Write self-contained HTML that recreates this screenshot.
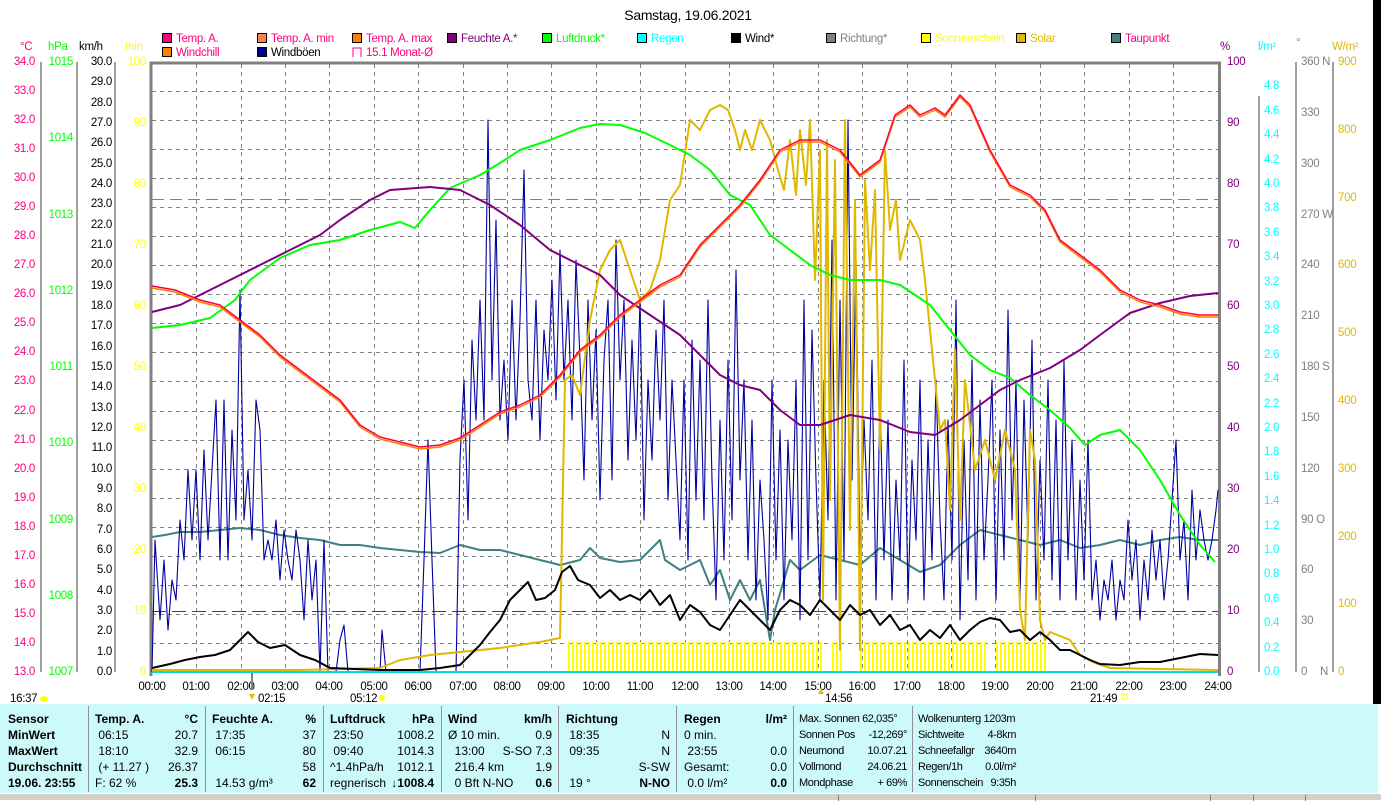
<!DOCTYPE html>
<html><head><meta charset="utf-8">
<style>
*{margin:0;padding:0;box-sizing:border-box}
body{width:1381px;height:800px;overflow:hidden;background:#fff;font-family:"Liberation Sans",sans-serif;position:relative}
svg{position:absolute;left:0;top:0}
svg text{font-family:"Liberation Sans",sans-serif;font-size:11.5px;letter-spacing:-0.3px}
.tbl{position:absolute;left:0;top:704px;width:1378px;height:89px;background:#ccf9f9}
.col{position:absolute;top:7px;font-size:12px;color:#000}
.col div{height:16px;line-height:16px;display:flex;justify-content:space-between;white-space:nowrap}
.sm{font-size:11px;letter-spacing:-0.4px}
.b{font-weight:bold}
.dv{position:absolute;top:2px;width:1px;height:86px;background:#909090}
.sb{position:absolute;left:0;top:793px;width:1381px;height:7px;background:#d4d0c8;border-top:1px solid #fff}
.sb i{position:absolute;top:1px;height:6px;border-left:1px solid #808080}
</style></head><body>
<svg width="1381" height="704" viewBox="0 0 1381 704">
<defs>
<pattern id="sun" width="4" height="30" patternUnits="userSpaceOnUse"><rect x="0" y="0" width="2" height="30" fill="#ffff00"/></pattern>
</defs>
<rect x="1373" y="0" width="8" height="704" fill="#000"/>
<text x="688" y="20" text-anchor="middle" style="font-size:14px">Samstag, 19.06.2021</text>
<g style="font-size:11.5px">
<rect x="162.5" y="33.5" width="9" height="9" fill="#ff0080" stroke="#000"/><text x="176" y="42" fill="#ff0080">Temp. A.</text>
<rect x="257.5" y="33.5" width="9" height="9" fill="#ff8040" stroke="#000"/><text x="271" y="42" fill="#ff0080">Temp. A. min</text>
<rect x="352.5" y="33.5" width="9" height="9" fill="#ff8000" stroke="#000"/><text x="366" y="42" fill="#ff0080">Temp. A. max</text>
<rect x="447.5" y="33.5" width="9" height="9" fill="#800080" stroke="#000"/><text x="461" y="42" fill="#800080">Feuchte A.*</text>
<rect x="542.5" y="33.5" width="9" height="9" fill="#00ff00" stroke="#000"/><text x="556" y="42" fill="#00ff00">Luftdruck*</text>
<rect x="637.5" y="33.5" width="9" height="9" fill="#00ffff" stroke="#000"/><text x="651" y="42" fill="#00ffff">Regen</text>
<rect x="731.5" y="33.5" width="9" height="9" fill="#000" stroke="#000"/><text x="745" y="42" fill="#000">Wind*</text>
<rect x="826.5" y="33.5" width="9" height="9" fill="#808080" stroke="#000"/><text x="840" y="42" fill="#808080">Richtung*</text>
<rect x="921.5" y="33.5" width="9" height="9" fill="#ffff00" stroke="#000"/><text x="935" y="42" fill="#ffff00">Sonnenschein</text>
<rect x="1016.5" y="33.5" width="9" height="9" fill="#e0b800" stroke="#000"/><text x="1030" y="42" fill="#e0b800">Solar</text>
<rect x="1111.5" y="33.5" width="9" height="9" fill="#408080" stroke="#000"/><text x="1125" y="42" fill="#ff0080">Taupunkt</text>
<rect x="162.5" y="47.5" width="9" height="9" fill="#ff8000" stroke="#000"/><text x="176" y="56" fill="#ff0080">Windchill</text>
<rect x="257.5" y="47.5" width="9" height="9" fill="#000090" stroke="#000"/><text x="271" y="56" fill="#000">Windböen</text>
<path d="M353,57 V48 H361 V57" fill="none" stroke="#ff0080"/><text x="366" y="56" fill="#ff0080">15.1 Monat-Ø</text>
</g>
<text x="20" y="50" fill="#ff0080">°C</text>
<text x="48" y="50" fill="#00ff00">hPa</text>
<text x="79" y="50" fill="#000">km/h</text>
<text x="125" y="50" fill="#ffff00">min</text>
<text x="1220" y="50" fill="#800080">%</text>
<text x="1258" y="50" fill="#00ffff">l/m²</text>
<text x="1296" y="46" fill="#808080">°</text>
<text x="1332" y="50" fill="#e0b800">W/m²</text>
<g stroke="#808080" stroke-dasharray="4,4" stroke-width="1">
<path d="M196.5,64V672M241.5,64V672M285.5,64V672M329.5,64V672M374.5,64V672M418.5,64V672M463.5,64V672M507.5,64V672M551.5,64V672M596.5,64V672M640.5,64V672M685.5,64V672M729.5,64V672M773.5,64V672M818.5,64V672M862.5,64V672M907.5,64V672M951.5,64V672M995.5,64V672M1040.5,64V672M1084.5,64V672M1129.5,64V672M1173.5,64V672"/>
<path d="M152,91.5H1218M152,120.5H1218M152,149.5H1218M152,178.5H1218M152,207.5H1218M152,236.5H1218M152,265.5H1218M152,294.5H1218M152,323.5H1218M152,352.5H1218M152,381.5H1218M152,411.5H1218M152,440.5H1218M152,469.5H1218M152,498.5H1218M152,527.5H1218M152,556.5H1218M152,585.5H1218M152,614.5H1218M152,643.5H1218"/>
</g>
<path d="M152,199.5H1218" stroke="#808080" stroke-dasharray="12,6"/>
<path d="M152,611.5H1218" stroke="#c00060" stroke-dasharray="14,6"/>
<g stroke="#808080" stroke-width="1.5" fill="none">
<path d="M41,62V672M77,62V672M115,62V672M1259,96V672M1296,62V672M1333,62V672"/>
<path d="M151,62V676" stroke-width="3"/>
<path d="M150,63H1221" stroke-width="3"/>
<path d="M1219.5,62V676" stroke-width="3"/>
</g>
<g fill="#ff0080" text-anchor="end" dominant-baseline="middle">
<text x="35" y="62">34.0</text><text x="35" y="91">33.0</text><text x="35" y="120">32.0</text><text x="35" y="149">31.0</text><text x="35" y="178">30.0</text><text x="35" y="207">29.0</text><text x="35" y="236">28.0</text><text x="35" y="265">27.0</text><text x="35" y="294">26.0</text><text x="35" y="323">25.0</text><text x="35" y="352">24.0</text><text x="35" y="381">23.0</text><text x="35" y="411">22.0</text><text x="35" y="440">21.0</text><text x="35" y="469">20.0</text><text x="35" y="498">19.0</text><text x="35" y="527">18.0</text><text x="35" y="556">17.0</text><text x="35" y="585">16.0</text><text x="35" y="614">15.0</text><text x="35" y="643">14.0</text><text x="35" y="672">13.0</text>
</g>
<g fill="#00ff00" text-anchor="end" dominant-baseline="middle">
<text x="73" y="62">1015</text><text x="73" y="138">1014</text><text x="73" y="215">1013</text><text x="73" y="291">1012</text><text x="73" y="367">1011</text><text x="73" y="443">1010</text><text x="73" y="520">1009</text><text x="73" y="596">1008</text><text x="73" y="672">1007</text>
</g>
<g fill="#000" text-anchor="end" dominant-baseline="middle">
<text x="112" y="62">30.0</text><text x="112" y="82">29.0</text><text x="112" y="103">28.0</text><text x="112" y="123">27.0</text><text x="112" y="143">26.0</text><text x="112" y="164">25.0</text><text x="112" y="184">24.0</text><text x="112" y="204">23.0</text><text x="112" y="225">22.0</text><text x="112" y="245">21.0</text><text x="112" y="265">20.0</text><text x="112" y="286">19.0</text><text x="112" y="306">18.0</text><text x="112" y="326">17.0</text><text x="112" y="347">16.0</text><text x="112" y="367">15.0</text><text x="112" y="387">14.0</text><text x="112" y="408">13.0</text><text x="112" y="428">12.0</text><text x="112" y="448">11.0</text><text x="112" y="469">10.0</text><text x="112" y="489">9.0</text><text x="112" y="509">8.0</text><text x="112" y="530">7.0</text><text x="112" y="550">6.0</text><text x="112" y="570">5.0</text><text x="112" y="591">4.0</text><text x="112" y="611">3.0</text><text x="112" y="631">2.0</text><text x="112" y="652">1.0</text><text x="112" y="672">0.0</text>
</g>
<g fill="#ffff00" text-anchor="end" dominant-baseline="middle">
<text x="146" y="62">100</text><text x="146" y="123">90</text><text x="146" y="184">80</text><text x="146" y="245">70</text><text x="146" y="306">60</text><text x="146" y="367">50</text><text x="146" y="428">40</text><text x="146" y="489">30</text><text x="146" y="550">20</text><text x="146" y="611">10</text><text x="146" y="672">0</text>
</g>
<g fill="#800080" dominant-baseline="middle">
<text x="1227" y="62">100</text><text x="1227" y="123">90</text><text x="1227" y="184">80</text><text x="1227" y="245">70</text><text x="1227" y="306">60</text><text x="1227" y="367">50</text><text x="1227" y="428">40</text><text x="1227" y="489">30</text><text x="1227" y="550">20</text><text x="1227" y="611">10</text><text x="1227" y="672">0</text>
</g>
<g fill="#00ffff" dominant-baseline="middle">
<text x="1264" y="86">4.8</text><text x="1264" y="111">4.6</text><text x="1264" y="135">4.4</text><text x="1264" y="160">4.2</text><text x="1264" y="184">4.0</text><text x="1264" y="208">3.8</text><text x="1264" y="233">3.6</text><text x="1264" y="257">3.4</text><text x="1264" y="282">3.2</text><text x="1264" y="306">3.0</text><text x="1264" y="330">2.8</text><text x="1264" y="355">2.6</text><text x="1264" y="379">2.4</text><text x="1264" y="404">2.2</text><text x="1264" y="428">2.0</text><text x="1264" y="452">1.8</text><text x="1264" y="477">1.6</text><text x="1264" y="501">1.4</text><text x="1264" y="526">1.2</text><text x="1264" y="550">1.0</text><text x="1264" y="574">0.8</text><text x="1264" y="599">0.6</text><text x="1264" y="623">0.4</text><text x="1264" y="648">0.2</text><text x="1264" y="672">0.0</text>
</g>
<g fill="#808080" dominant-baseline="middle">
<text x="1301" y="62">360 N</text><text x="1301" y="113">330</text><text x="1301" y="164">300</text><text x="1301" y="215">270 W</text><text x="1301" y="265">240</text><text x="1301" y="316">210</text><text x="1301" y="367">180 S</text><text x="1301" y="418">150</text><text x="1301" y="469">120</text><text x="1301" y="520">90  O</text><text x="1301" y="570">60</text><text x="1301" y="621">30</text><text x="1301" y="672">0</text><text x="1320" y="672">N</text>
</g>
<g fill="#e0b800" dominant-baseline="middle">
<text x="1338" y="62">900</text><text x="1338" y="130">800</text><text x="1338" y="198">700</text><text x="1338" y="265">600</text><text x="1338" y="333">500</text><text x="1338" y="401">400</text><text x="1338" y="469">300</text><text x="1338" y="537">200</text><text x="1338" y="604">100</text><text x="1338" y="672">0</text>
</g>
<rect x="566" y="642" width="256" height="30" fill="url(#sun)"/>
<rect x="830" y="642" width="14" height="30" fill="url(#sun)"/>
<rect x="858" y="642" width="130" height="30" fill="url(#sun)"/>
<rect x="994" y="642" width="52" height="30" fill="url(#sun)"/>
<g fill="none" stroke-linejoin="round">
<polyline stroke="#408080" stroke-width="2" points="152,537 165,535 180,532 200,532 220,530 240,528 260,530 280,535 300,538 320,540 340,545 360,545 380,548 400,550 420,552 440,553 460,545 480,550 500,550 520,555 540,560 560,565 580,560 590,548 600,558 620,562 640,560 650,550 660,540 665,560 680,570 700,560 710,585 720,570 730,600 740,580 750,600 760,580 770,640 775,610 790,560 800,570 820,555 840,560 860,565 880,548 900,560 920,572 940,565 960,545 980,530 1000,535 1020,540 1040,545 1060,540 1080,548 1100,545 1120,540 1140,545 1160,540 1180,537 1200,540 1218,540"/>
<polyline stroke="#0000a0" stroke-width="1.1" points="152,672 155,540 160,620 164,560 168,630 172,580 176,600 180,520 184,560 188,470 192,540 196,470 200,560 204,450 208,540 212,470 216,400 220,560 224,400 228,560 232,430 236,520 240,290 244,520 248,470 252,540 256,400 260,430 264,560 268,540 272,560 276,520 280,580 284,530 288,560 292,580 296,530 300,560 304,620 308,540 312,600 316,560 320,672 324,540 328,672 332,672 336,672 340,640 344,625 348,672 380,672 382,630 386,672 420,672 424,560 428,440 432,560 436,672 456,672 460,460 464,380 468,520 472,340 476,420 480,300 484,420 488,120 492,380 496,220 500,420 504,360 508,440 512,300 516,420 520,320 524,170 528,380 532,420 536,300 540,440 544,330 548,380 552,280 556,400 560,250 564,380 568,300 572,420 576,260 580,360 584,480 588,300 592,420 596,330 600,500 604,360 608,300 612,480 616,240 620,380 624,300 628,460 632,340 636,440 640,300 644,520 648,380 652,460 656,330 660,420 664,300 668,500 672,380 676,460 680,540 684,380 688,560 692,340 696,500 700,360 704,520 708,300 712,480 716,600 720,420 724,560 728,360 732,520 736,270 740,480 744,380 748,560 752,420 756,600 760,480 764,540 768,620 772,380 776,560 780,430 784,600 788,440 792,540 796,380 800,620 804,300 808,560 812,330 816,480 820,600 824,380 828,520 832,240 836,600 840,300 844,560 848,120 852,480 856,260 860,560 864,420 868,520 872,360 876,600 880,400 884,560 888,420 892,600 896,480 900,560 904,360 908,600 912,460 916,540 920,380 924,600 928,440 932,560 936,380 940,520 944,600 948,420 952,560 956,300 960,620 964,440 968,580 972,360 976,600 980,400 984,560 988,480 992,380 996,600 1000,430 1004,560 1008,310 1012,520 1016,380 1020,600 1024,400 1028,540 1032,340 1036,600 1040,460 1044,560 1048,380 1052,580 1056,420 1060,600 1064,360 1068,560 1072,440 1076,600 1080,480 1084,580 1088,440 1092,600 1096,560 1100,620 1104,580 1108,600 1112,560 1116,620 1120,580 1124,600 1128,520 1132,580 1136,540 1140,620 1144,560 1148,600 1152,530 1156,580 1160,540 1164,600 1168,560 1172,500 1176,440 1180,560 1184,520 1188,600 1192,490 1196,560 1200,510 1204,540 1208,560 1212,540 1216,510 1218,490"/>
<polyline stroke="#e0b800" stroke-width="2" points="152,670 300,670 380,668 400,660 430,655 460,652 500,648 540,642 560,638 565,380 572,375 580,395 590,320 600,270 610,250 620,240 630,270 640,300 650,290 660,260 670,200 680,185 690,120 700,130 710,110 720,105 728,110 735,130 740,150 745,130 752,150 760,120 770,140 778,170 784,190 790,140 796,195 800,130 806,185 810,120 815,280 820,150 823,600 827,140 830,500 835,160 840,650 845,120 850,530 855,200 860,650 865,180 870,270 875,190 880,450 885,150 890,230 896,200 900,260 910,220 920,240 925,280 930,330 935,380 940,430 945,420 950,510 955,350 960,520 965,380 975,470 985,440 995,480 1005,430 1015,470 1020,610 1025,640 1030,430 1035,460 1040,620 1045,640 1050,632 1060,636 1070,640 1080,655 1095,663 1110,668 1218,670"/>
<polyline stroke="#00ff00" stroke-width="2" points="152,328 180,325 210,318 235,300 250,280 280,258 310,245 340,240 370,230 400,222 415,228 430,210 450,188 480,175 500,163 520,150 550,140 580,128 600,124 620,125 645,133 670,145 690,155 710,170 730,195 750,205 770,235 790,250 810,265 830,275 850,280 880,280 900,285 930,305 950,330 970,355 990,370 1010,378 1030,395 1050,410 1070,428 1085,445 1100,435 1120,430 1140,450 1160,480 1180,515 1200,545 1215,562"/>
<polyline stroke="#800080" stroke-width="2" points="152,312 180,305 210,290 240,275 270,260 300,245 320,235 340,220 370,200 390,190 430,187 460,190 490,205 520,225 550,250 580,265 600,275 620,295 650,315 680,335 700,355 720,375 740,385 760,390 780,410 800,425 820,425 850,415 880,420 910,432 935,435 960,420 980,405 1000,390 1020,380 1050,368 1080,350 1100,335 1130,313 1160,303 1190,296 1218,293"/>
<polyline stroke="#ff8000" stroke-width="1.5" transform="translate(0,2)" points="152,286 175,290 200,300 220,305 240,320 260,335 280,355 300,370 320,385 340,400 360,425 380,437 400,442 420,447 440,445 460,438 480,425 500,412 520,405 540,395 560,375 580,350 600,335 620,315 640,300 660,285 680,275 700,245 720,225 740,205 760,180 780,150 800,140 820,140 840,150 860,175 880,160 895,115 910,105 920,115 935,108 945,115 960,95 970,105 990,150 1010,185 1030,195 1045,210 1060,240 1080,255 1100,270 1120,290 1140,300 1160,305 1180,312 1200,315 1218,315"/>
<polyline stroke="#ff0040" stroke-width="1.5" points="152,286 175,290 200,300 220,305 240,320 260,335 280,355 300,370 320,385 340,400 360,425 380,437 400,442 420,447 440,445 460,438 480,425 500,412 520,405 540,395 560,375 580,350 600,335 620,315 640,300 660,285 680,275 700,245 720,225 740,205 760,180 780,150 800,140 820,140 840,150 860,175 880,160 895,115 910,105 920,115 935,108 945,115 960,95 970,105 990,150 1010,185 1030,195 1045,210 1060,240 1080,255 1100,270 1120,290 1140,300 1160,305 1180,312 1200,315 1218,315"/>
<polyline stroke="#000" stroke-width="2" points="152,668 170,664 185,660 200,657 215,655 230,650 240,640 248,632 258,642 270,648 285,645 300,655 315,660 330,668 380,670 420,670 440,668 460,665 470,655 480,645 490,632 500,620 510,600 520,590 528,582 536,600 545,598 555,590 562,572 570,566 578,580 590,585 600,598 610,590 620,600 630,595 640,600 650,590 660,605 670,595 680,620 690,605 700,612 710,625 720,630 730,615 740,600 750,610 760,620 770,630 780,610 790,600 800,605 810,615 820,600 830,610 840,620 850,605 860,615 870,610 880,625 890,615 900,630 910,625 920,640 930,630 940,638 950,625 960,640 970,630 980,622 990,618 1000,620 1010,632 1020,630 1030,640 1040,632 1050,640 1060,650 1070,650 1080,655 1090,660 1100,664 1120,665 1140,662 1160,662 1180,658 1200,654 1218,655"/>
</g>
<path d="M152,672H1218" stroke="#00e0e0" stroke-width="2"/>
<g fill="#000" text-anchor="middle">
<text x="152" y="690">00:00</text><text x="196" y="690">01:00</text><text x="241" y="690">02:00</text><text x="285" y="690">03:00</text><text x="329" y="690">04:00</text><text x="374" y="690">05:00</text><text x="418" y="690">06:00</text><text x="463" y="690">07:00</text><text x="507" y="690">08:00</text><text x="551" y="690">09:00</text><text x="596" y="690">10:00</text><text x="640" y="690">11:00</text><text x="685" y="690">12:00</text><text x="729" y="690">13:00</text><text x="773" y="690">14:00</text><text x="818" y="690">15:00</text><text x="862" y="690">16:00</text><text x="907" y="690">17:00</text><text x="951" y="690">18:00</text><text x="995" y="690">19:00</text><text x="1040" y="690">20:00</text><text x="1084" y="690">21:00</text><text x="1129" y="690">22:00</text><text x="1173" y="690">23:00</text><text x="1218" y="690">24:00</text>
</g>
<text x="10" y="702">16:37</text><ellipse cx="44" cy="699" rx="4" ry="3" fill="#ffff00"/>
<path d="M252,673V690" stroke="#808080" stroke-width="2"/>
<path d="M249,694l3,6l3,-6z" fill="#e0c000"/><text x="258" y="702">02:15</text>
<text x="350" y="702">05:12</text><circle cx="382" cy="698" r="3" fill="#ffff00"/>
<path d="M818,694l3,-6l3,6z" fill="#e0c000"/><text x="825" y="702">14:56</text>
<text x="1090" y="702">21:49</text><rect x="1122" y="694" width="5" height="5" fill="none" stroke="#ffff00"/>
</svg>

<div class="tbl">
<div class="dv" style="left:88px"></div><div class="dv" style="left:205px"></div><div class="dv" style="left:323px"></div><div class="dv" style="left:441px"></div><div class="dv" style="left:558px"></div><div class="dv" style="left:676px"></div><div class="dv" style="left:793px"></div><div class="dv" style="left:912px"></div>
<div class="col b" style="left:8px;width:78px"><div>Sensor</div><div>MinWert</div><div>MaxWert</div><div>Durchschnitt</div><div>19.06. 23:55</div></div>
<div class="col" style="left:95px;width:103px"><div class="b"><span>Temp. A.</span><span>°C</span></div><div><span>&nbsp;06:15</span><span>20.7</span></div><div><span>&nbsp;18:10</span><span>32.9</span></div><div><span>&nbsp;(+ 11.27 )</span><span>26.37</span></div><div><span>F: 62 %</span><span class="b">25.3</span></div></div>
<div class="col" style="left:212px;width:104px"><div class="b"><span>Feuchte A.</span><span>%</span></div><div><span>&nbsp;17:35</span><span>37</span></div><div><span>&nbsp;06:15</span><span>80</span></div><div><span></span><span>58</span></div><div><span>&nbsp;14.53 g/m³</span><span class="b">62</span></div></div>
<div class="col" style="left:330px;width:104px"><div class="b"><span>Luftdruck</span><span>hPa</span></div><div><span>&nbsp;23:50</span><span>1008.2</span></div><div><span>&nbsp;09:40</span><span>1014.3</span></div><div><span>^1.4hPa/h</span><span>1012.1</span></div><div><span>regnerisch</span><span class="b">↓1008.4</span></div></div>
<div class="col" style="left:448px;width:104px"><div class="b"><span>Wind</span><span>km/h</span></div><div><span>Ø 10 min.</span><span>0.9</span></div><div><span>&nbsp;&nbsp;13:00</span><span>S-SO 7.3</span></div><div><span>&nbsp;&nbsp;216.4 km</span><span>1.9</span></div><div><span>&nbsp;&nbsp;0 Bft N-NO</span><span class="b">0.6</span></div></div>
<div class="col" style="left:566px;width:104px"><div class="b"><span>Richtung</span><span></span></div><div><span>&nbsp;18:35</span><span>N</span></div><div><span>&nbsp;09:35</span><span>N</span></div><div><span></span><span>S-SW</span></div><div><span>&nbsp;19 °</span><span class="b">N-NO</span></div></div>
<div class="col" style="left:684px;width:103px"><div class="b"><span>Regen</span><span>l/m²</span></div><div><span>0 min.</span><span></span></div><div><span>&nbsp;23:55</span><span>0.0</span></div><div><span>Gesamt:</span><span>0.0</span></div><div><span>&nbsp;0.0 l/m²</span><span class="b">0.0</span></div></div>
<div class="col sm" style="left:799px;width:108px"><div><span>Max. Sonnen 62,035°</span></div><div><span>Sonnen Pos</span><span>-12,269°</span></div><div><span>Neumond</span><span>10.07.21</span></div><div><span>Vollmond</span><span>24.06.21</span></div><div><span>Mondphase</span><span>+ 69%</span></div></div>
<div class="col sm" style="left:918px;width:98px"><div><span>Wolkenunterg 1203m</span></div><div><span>Sichtweite</span><span>4-8km</span></div><div><span>Schneefallgr</span><span>3640m</span></div><div><span>Regen/1h</span><span>0.0l/m²</span></div><div><span>Sonnenschein</span><span>9:35h</span></div></div>
</div>
<div class="sb"><i style="left:838px"></i><i style="left:1035px"></i><i style="left:1210px"></i><i style="left:1253px"></i><i style="left:1305px"></i></div>
</body></html>
